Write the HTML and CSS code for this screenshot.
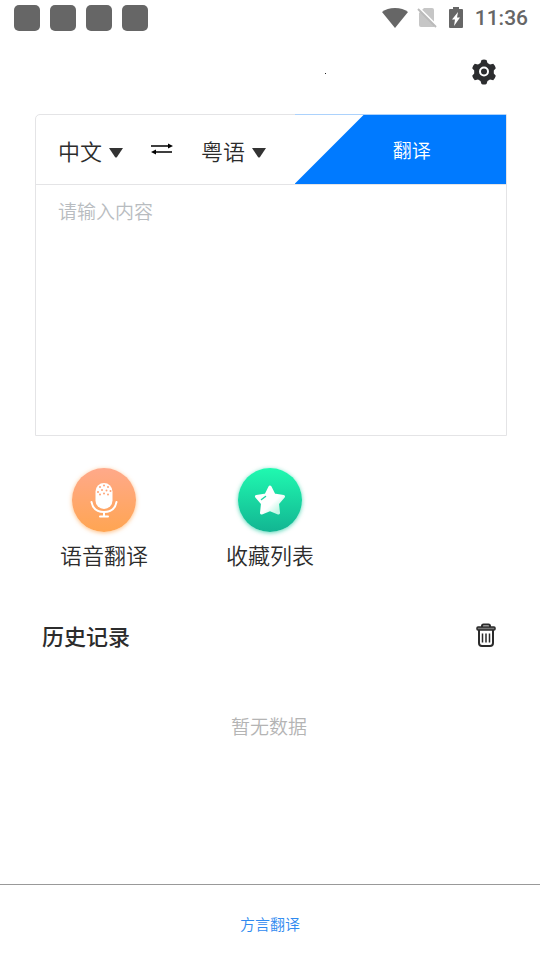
FILE: index.html
```html
<!DOCTYPE html>
<html lang="zh-CN">
<head>
<meta charset="utf-8">
<meta name="viewport" content="width=device-width, initial-scale=1">
<title>方言翻译</title>
<link rel="stylesheet" href="styles.css">
</head>
<body>
<div class="status">
  <div class="status-apps"><i></i><i></i><i></i><i></i></div>
  <div class="status-system">
    <svg width="28" height="22" viewBox="0 0 28 22"><path d="M1 5Q6 1 14 1T27 5L14 21Z" fill="#666"/></svg>
    <svg width="20" height="22" viewBox="0 0 20 22"><path d="M7 1H15Q17 1 17 3V20H4Q2 20 2 18V6Z" fill="#c6c6c6"/><path d="M2 1L20 19" stroke="#fff" stroke-width="2"/><path d="M1 2L19 20" stroke="#bbb" stroke-width="2"/></svg>
    <svg width="14" height="22" viewBox="0 0 14 22"><path d="M4 0H10V2H13Q14 2 14 3V20Q14 21 13 21H1Q0 21 0 20V3Q0 2 1 2H4Z" fill="#666"/><path d="M9 5L3 12.500H6L5 19L11 10.500H8Z" fill="#fff"/></svg>
    <time>11:36</time>
  </div>
</div>

<header class="topbar">
  <span class="topbar-dot"></span>
  <button class="icon-button" type="button" aria-label="设置">
    <svg width="24" height="26" viewBox="0 0 24 26"><path d="M9.500 1Q12 0 14.500 1L15.500 4L18 5.500L21.200 4.800Q23.200 6.500 23.800 9.200L21.800 11.500V14.500L23.800 16.800Q23.200 19.500 21.200 21.200L18 20.500L15.500 22L14.500 25Q12 26 9.500 25L8.500 22L6 20.500L2.800 21.200Q.8 19.500.2 16.800L2.200 14.500V11.500L.2 9.200Q.8 6.500 2.800 4.800L6 5.500L8.500 4Z" fill="#2c2d2f"/><circle cx="12" cy="12.500" r="4" fill="none" stroke="#fff" stroke-width="2"/></svg>
  </button>
</header>

<main class="content">
  <form class="translator">
    <div class="translator-bar">
      <div class="languages">
        <label class="language">
          <select aria-label="源语言"><option>中文</option><option>粤语</option></select>
          <svg width="14" height="10" viewBox="0 0 14 10"><path d="M0 0H14L8 9Q7 10 6 9Z" fill="#333"/></svg>
        </label>
        <button class="swap" type="button" aria-label="交换语言">
          <svg width="22" height="12" viewBox="0 0 22 12"><path d="M0 3H18M4 9H21" stroke="#000" stroke-width="1.500"/><path d="M17 .5L22 3L17 5.500ZM5 6.500L0 9L5 11.500Z"/></svg>
        </button>
        <label class="language">
          <select aria-label="目标语言"><option>粤语</option><option>中文</option></select>
          <svg width="14" height="10" viewBox="0 0 14 10"><path d="M0 0H14L8 9Q7 10 6 9Z" fill="#333"/></svg>
        </label>
      </div>
      <button class="translate" type="submit">翻译</button>
    </div>
    <textarea class="source" aria-label="输入内容" placeholder="请输入内容"></textarea>
  </form>

  <nav class="actions">
    <button class="action" type="button">
      <span class="action-icon voice">
        <svg width="28" height="38" viewBox="0 0 28 38"><rect x="5.500" y="2" width="17" height="26" rx="8.500" fill="#fff"/><path d="M1.500 21C3 29 8 31 14 31S25 29 26.500 21" fill="none" stroke="#fff" stroke-width="2" stroke-linecap="round"/><path d="M14 31V35M10 35.500H18" stroke="#fff" stroke-width="2" stroke-linecap="round"/><g fill="#ffa477"><circle cx="10" cy="6" r="1"/><circle cx="14" cy="4.500" r="1"/><circle cx="18" cy="6" r="1"/><circle cx="12" cy="9" r="1"/><circle cx="16.500" cy="9.500" r="1"/><circle cx="20.500" cy="10" r="1"/><circle cx="8" cy="11" r="1"/><circle cx="14" cy="12.500" r="1"/><circle cx="10" cy="13.500" r="1"/><circle cx="18" cy="13.500" r="1"/></g></svg>
      </span>
      语音翻译
    </button>
    <button class="action" type="button">
      <span class="action-icon favorite">
        <svg width="32" height="32" viewBox="0 0 32 32"><defs><linearGradient id="star" x1="0" y1="0" x2="1" y2="1"><stop offset=".6" stop-color="#fff"/><stop offset=".85" stop-color="#c4f7e6"/></linearGradient></defs><path d="M16 3L20 11L29.500 12.500L23.500 19.500L24.500 29L16 25.500L7.500 29L8.500 19.500L2.500 12.500L12 11Z" fill="url(#star)" stroke="url(#star)" stroke-width="3" stroke-linejoin="round"/><path d="M7.500 15.500L11.500 12.500" fill="none" stroke="#1fd5a1" stroke-width="1.500" stroke-linecap="round"/></svg>
      </span>
      收藏列表
    </button>
  </nav>

  <section class="history">
    <div class="history-head">
      <h2>历史记录</h2>
      <button class="icon-button" type="button" aria-label="清空历史记录">
        <svg width="20" height="24" viewBox="0 0 20 24" fill="none" stroke="#2b2b2b" stroke-width="2"><path d="M6 4V3Q6 1.500 7.500 1.500H12.500Q14 1.500 14 3V4"/><rect x="1" y="4" width="18" height="3" rx="1" fill="#777" stroke-width="1.500"/><path d="M3 7V20Q3 23 6 23H14Q17 23 17 20V7"/><path d="M6.500 10.500V19.500M10 10.500V19.500M13.500 10.500V19.500" stroke-width="1.500"/></svg>
      </button>
    </div>
    <p class="empty">暂无数据</p>
  </section>
</main>

<footer class="tabbar"><a href="#">方言翻译</a></footer>
</body>
</html>
```
FILE: styles.css
```css
* { box-sizing: border-box; }

body {
  margin: 0;
  min-height: 100vh;
  display: flex;
  flex-direction: column;
  background: #fff;
  color: #2c2c2c;
  font-family: "Noto Sans CJK SC", sans-serif;
  font-weight: 350;
}

button, select, textarea {
  margin: 0;
  padding: 0;
  border: 0;
  background: none;
  color: inherit;
  font: inherit;
}

svg { display: block; flex: none; }

.status {
  display: flex;
  justify-content: space-between;
  align-items: center;
  height: 36px;
  padding: 0 12px 0 14px;
}

.status-apps { display: flex; gap: 10px; }

.status-apps i {
  width: 26px;
  height: 26px;
  border-radius: 5px;
  background: #666;
}

.status-system {
  display: flex;
  align-items: center;
  gap: 12px;
  height: 34px;
  color: #666;
  font: 500 21px/38px Roboto, sans-serif;
}

.status-system svg:first-child { margin-right: -4px; }

.topbar {
  display: grid;
  grid-template-columns: 3fr 2fr;
  align-items: center;
  height: 71px;
  padding: 0 44px 0 0;
}

.topbar-dot {
  justify-self: end;
  width: 1px;
  height: 1px;
  margin: 3px -28px 0 0;
  background: #222;
}

.icon-button { justify-self: end; cursor: pointer; }

.content { flex: 1; padding: 7px 33px 0 35px; }

.translator {
  border: 1px solid #e4e4e6;
  border-radius: 5px 0 0 0;
}

.translator-bar {
  display: flex;
  justify-content: space-between;
  height: 70px;
  border-bottom: 1px solid #e4e4e6;
}

.languages {
  display: flex;
  align-items: center;
  gap: 28px;
  padding-left: 22px;
}

.language {
  display: flex;
  align-items: center;
  gap: 6px;
  font-size: 22px;
  line-height: 32px;
}

.language select { appearance: none; }
.language svg { margin-top: 6px; }
.swap { margin-bottom: 2px; }

.translate {
  width: 45%;
  height: 70px;
  margin-top: -1px;
  padding-left: 23px;
  border-top: 1px solid #acd2fc;
  background: #007aff;
  clip-path: polygon(0 0, 100% 0, 100% 100%, 0 100%, 69px 1px, 0 1px);
  color: #fff;
  font-size: 19px;
}

.source {
  display: block;
  width: 100%;
  height: 250px;
  padding: 12px 22px;
  font-size: 19px;
  line-height: 28px;
  resize: none;
}

.source::placeholder { color: #b8bcc0; opacity: 1; }

.actions { display: flex; gap: 78px; padding: 32px 0 0 25px; }

.action {
  display: flex;
  flex-direction: column;
  align-items: center;
  gap: 6px;
  font-size: 22px;
  line-height: 32px;
}

.action-icon {
  display: flex;
  align-items: center;
  justify-content: center;
  width: 64px;
  height: 64px;
  border-radius: 50%;
}

.voice {
  background: linear-gradient(#ffa98a, #ffa552);
  box-shadow: 0 1px 4px #ffa552b3;
}

.favorite {
  background: linear-gradient(#20f9b0, #12b592);
  box-shadow: 0 1px 4px #12c89ab3;
}

.history { padding: 48px 11px 0 7px; }

.history-head {
  display: flex;
  align-items: center;
  justify-content: space-between;
}

h2 {
  margin: 0;
  font-size: 22px;
  font-weight: 500;
  line-height: 34px;
}

.empty {
  margin: 60px 0 0;
  color: #b4b4b4;
  font-size: 19px;
  line-height: 28px;
  text-align: center;
}

.tabbar {
  display: flex;
  align-items: center;
  justify-content: center;
  height: 76px;
  border-top: 1px solid #999;
}

.tabbar a {
  padding-top: 2px;
  color: #2f8af0;
  font-size: 15px;
  line-height: 22px;
  text-decoration: none;
}
```
